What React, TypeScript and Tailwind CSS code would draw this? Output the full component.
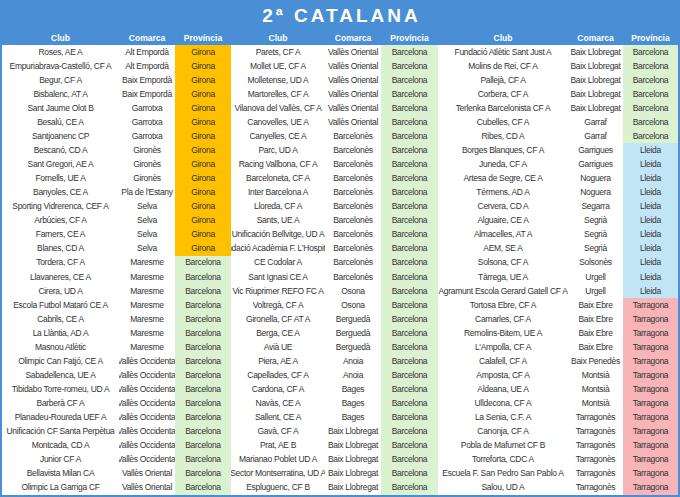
import React from "react";

type Row = [string, string, string];

const groupOne: Row[] = [
  ["Roses, AE A", "Alt Empordà", "Girona"],
  ["Empuriabrava-Castelló, CF A", "Alt Empordà", "Girona"],
  ["Begur, CF A", "Baix Empordà", "Girona"],
  ["Bisbalenc, AT A", "Baix Empordà", "Girona"],
  ["Sant Jaume Olot B", "Garrotxa", "Girona"],
  ["Besalú, CE A", "Garrotxa", "Girona"],
  ["Santjoanenc CP", "Garrotxa", "Girona"],
  ["Bescanó, CD A", "Gironès", "Girona"],
  ["Sant Gregori, AE A", "Gironès", "Girona"],
  ["Fornells, UE A", "Gironès", "Girona"],
  ["Banyoles, CE A", "Pla de l'Estany", "Girona"],
  ["Sporting Vidrerenca, CEF A", "Selva", "Girona"],
  ["Arbúcies, CF A", "Selva", "Girona"],
  ["Farners, CE A", "Selva", "Girona"],
  ["Blanes, CD A", "Selva", "Girona"],
  ["Tordera, CF A", "Maresme", "Barcelona"],
  ["Llavaneres, CE A", "Maresme", "Barcelona"],
  ["Cirera, UD A", "Maresme", "Barcelona"],
  ["Escola Futbol Mataró CE A", "Maresme", "Barcelona"],
  ["Cabrils, CE A", "Maresme", "Barcelona"],
  ["La Llàntia, AD A", "Maresme", "Barcelona"],
  ["Masnou Atlètic", "Maresme", "Barcelona"],
  ["Olimpic Can Fatjó, CE A", "Vallès Occidental", "Barcelona"],
  ["Sabadellenca, UE A", "Vallès Occidental", "Barcelona"],
  ["Tibidabo Torre-romeu, UD A", "Vallès Occidental", "Barcelona"],
  ["Barberà CF A", "Vallès Occidental", "Barcelona"],
  ["Planadeu-Roureda UEF A", "Vallès Occidental", "Barcelona"],
  ["Unificación CF Santa Perpètua", "Vallès Occidental", "Barcelona"],
  ["Montcada, CD A", "Vallès Occidental", "Barcelona"],
  ["Junior CF A", "Vallès Occidental", "Barcelona"],
  ["Bellavista Milan CA", "Vallès Oriental", "Barcelona"],
  ["Olimpic La Garriga CF", "Vallès Oriental", "Barcelona"],
];

const groupTwo: Row[] = [
  ["Parets, CF A", "Vallès Oriental", "Barcelona"],
  ["Mollet UE, CF A", "Vallès Oriental", "Barcelona"],
  ["Molletense, UD A", "Vallès Oriental", "Barcelona"],
  ["Martorelles, CF A", "Vallès Oriental", "Barcelona"],
  ["Vilanova del Vallès, CF A", "Vallès Oriental", "Barcelona"],
  ["Canovelles, UE A", "Vallès Oriental", "Barcelona"],
  ["Canyelles, CE A", "Barcelonès", "Barcelona"],
  ["Parc, UD A", "Barcelonès", "Barcelona"],
  ["Racing Vallbona, CF A", "Barcelonès", "Barcelona"],
  ["Barceloneta, CF A", "Barcelonès", "Barcelona"],
  ["Inter Barcelona A", "Barcelonès", "Barcelona"],
  ["Lloreda, CF A", "Barcelonès", "Barcelona"],
  ["Sants, UE A", "Barcelonès", "Barcelona"],
  ["Unificación Bellvitge, UD A", "Barcelonès", "Barcelona"],
  ["Fundació Acadèmia F. L'Hospitalet", "Barcelonès", "Barcelona"],
  ["CE Codolar A", "Barcelonès", "Barcelona"],
  ["Sant Ignasi CE A", "Barcelonès", "Barcelona"],
  ["Vic Riuprimer REFO FC A", "Osona", "Barcelona"],
  ["Voltregà, CF A", "Osona", "Barcelona"],
  ["Gironella, CF AT A", "Berguedà", "Barcelona"],
  ["Berga, CE A", "Berguedà", "Barcelona"],
  ["Avià UE", "Berguedà", "Barcelona"],
  ["Piera, AE A", "Anoia", "Barcelona"],
  ["Capellades, CF A", "Anoia", "Barcelona"],
  ["Cardona, CF A", "Bages", "Barcelona"],
  ["Navàs, CE A", "Bages", "Barcelona"],
  ["Sallent, CE A", "Bages", "Barcelona"],
  ["Gavà, CF A", "Baix Llobregat", "Barcelona"],
  ["Prat, AE B", "Baix Llobregat", "Barcelona"],
  ["Marianao Poblet UD A", "Baix Llobregat", "Barcelona"],
  ["Sector Montserratina, UD A", "Baix Llobregat", "Barcelona"],
  ["Espluguenc, CF B", "Baix Llobregat", "Barcelona"],
];

const groupThree: Row[] = [
  ["Fundació Atlètic Sant Just A", "Baix Llobregat", "Barcelona"],
  ["Molins de Rei, CF A", "Baix Llobregat", "Barcelona"],
  ["Pallejà, CF A", "Baix Llobregat", "Barcelona"],
  ["Corbera, CF A", "Baix Llobregat", "Barcelona"],
  ["Terlenka Barcelonista CF A", "Baix Llobregat", "Barcelona"],
  ["Cubelles, CF A", "Garraf", "Barcelona"],
  ["Ribes, CD A", "Garraf", "Barcelona"],
  ["Borges Blanques, CF A", "Garrigues", "Lleida"],
  ["Juneda, CF A", "Garrigues", "Lleida"],
  ["Artesa de Segre, CE A", "Noguera", "Lleida"],
  ["Térmens, AD A", "Noguera", "Lleida"],
  ["Cervera, CD A", "Segarra", "Lleida"],
  ["Alguaire, CE A", "Segrià", "Lleida"],
  ["Almacelles, AT A", "Segrià", "Lleida"],
  ["AEM, SE A", "Segrià", "Lleida"],
  ["Solsona, CF A", "Solsonès", "Lleida"],
  ["Tàrrega, UE A", "Urgell", "Lleida"],
  ["Agramunt Escola Gerard Gatell CF A", "Urgell", "Lleida"],
  ["Tortosa Ebre, CF A", "Baix Ebre", "Tarragona"],
  ["Camarles, CF A", "Baix Ebre", "Tarragona"],
  ["Remolins-Bitem, UE A", "Baix Ebre", "Tarragona"],
  ["L'Ampolla, CF A", "Baix Ebre", "Tarragona"],
  ["Calafell, CF A", "Baix Penedès", "Tarragona"],
  ["Amposta, CF A", "Montsià", "Tarragona"],
  ["Aldeana, UE A", "Montsià", "Tarragona"],
  ["Ulldecona, CF A", "Montsià", "Tarragona"],
  ["La Senia, C.F. A", "Tarragonès", "Tarragona"],
  ["Canonja, CF A", "Tarragonès", "Tarragona"],
  ["Pobla de Mafumet CF B", "Tarragonès", "Tarragona"],
  ["Torreforta, CDC A", "Tarragonès", "Tarragona"],
  ["Escuela F. San Pedro San Pablo A", "Tarragonès", "Tarragona"],
  ["Salou, UD A", "Tarragonès", "Tarragona"],
];

// fill per província
const provinceBg: Record<string, string> = {
  Girona: "bg-[#ffc000]",
  Barcelona: "bg-[#daf2d0]",
  Lleida: "bg-[#c1e5f5]",
  Tarragona: "bg-[#f7b5b7]",
};

function Cell({ text, className = "" }: { text: string; className?: string }) {
  return (
    <div className={`flex h-[14.05px] items-center justify-center overflow-hidden whitespace-nowrap ${className}`}>
      <span>{text}</span>
    </div>
  );
}

export default function App() {
  const groups = [groupOne, groupTwo, groupThree];
  const rows = groupOne.map((_, i) => groups.map((g) => g[i]));

  return (
    <main
      className="w-[680px] bg-white text-[8.5px] leading-none tracking-[-0.3px] text-[#333333]"
      style={{ fontFamily: '"Liberation Sans", Arial, sans-serif' }}
    >
      <div className="border-x-2 border-b-2 border-[#4a8fd6]">
        <div className="bg-[#4a8fd6] text-white">
          <h1 className="flex h-[31px] items-center justify-center pl-[3px] text-[19px] font-bold tracking-[3px]">
            2ª CATALANA
          </h1>
          <div className="grid h-[14px] grid-cols-[117px_56px_56px_94px_56px_57px_130px_55px_55px] text-[8.5px] font-bold tracking-normal">
            {[0, 1, 2].map((g) => (
              <React.Fragment key={g}>
                <Cell text="Club" />
                <Cell text="Comarca" />
                <Cell text="Província" />
              </React.Fragment>
            ))}
          </div>
        </div>

        <div className="grid grid-cols-[117px_56px_56px_94px_56px_57px_130px_55px_55px]">
          {rows.map((row, i) => (
            <React.Fragment key={i}>
              {row.map(([club, comarca, prov], g) => (
                <React.Fragment key={g}>
                  <Cell text={club} />
                  <Cell text={comarca} />
                  <Cell text={prov} className={provinceBg[prov]} />
                </React.Fragment>
              ))}
            </React.Fragment>
          ))}
        </div>
      </div>
    </main>
  );
}
